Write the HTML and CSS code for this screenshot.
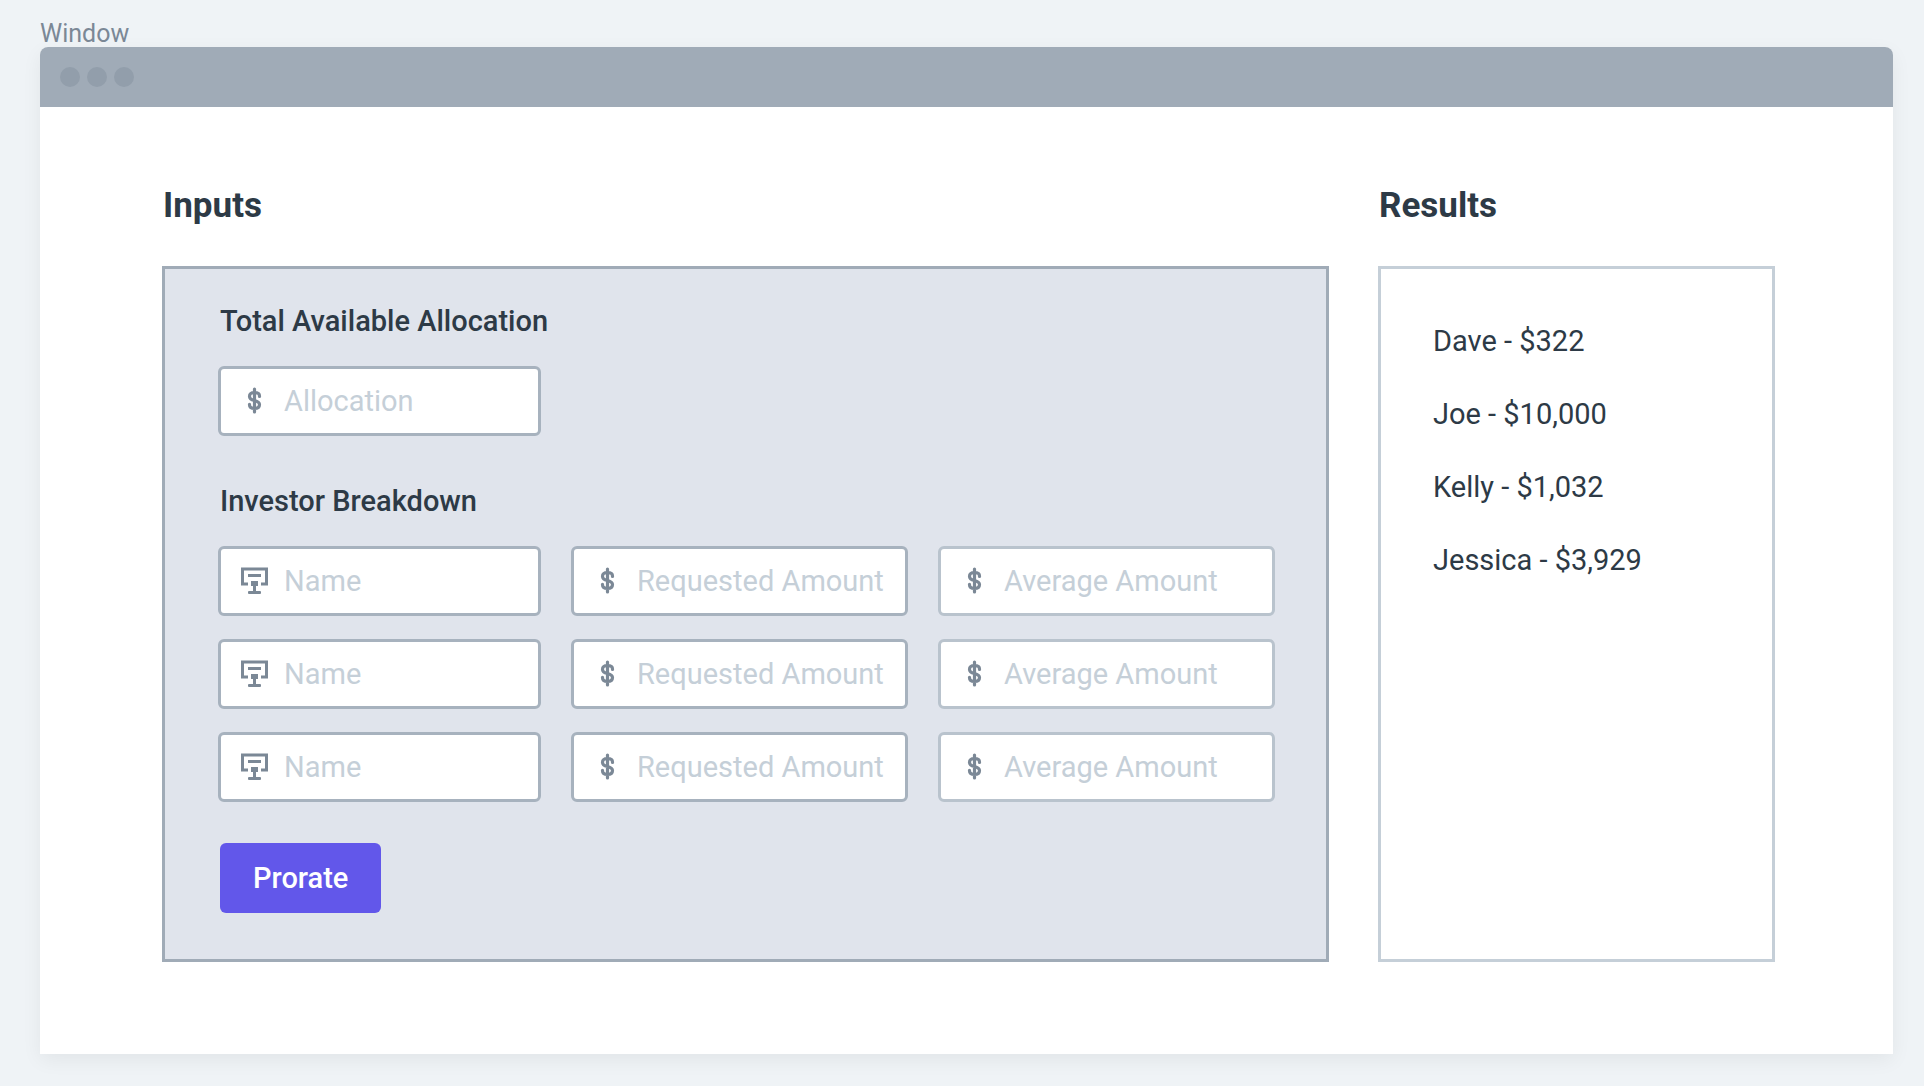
FILE: index.html
```html
<!DOCTYPE html>
<html lang="en">
<head>
<meta charset="utf-8">
<meta name="viewport" content="width=device-width, initial-scale=1">
<title>Window</title>
<link rel="stylesheet" href="styles.css">
</head>
<body>
<svg class="sprite" aria-hidden="true">
  <symbol id="icon-dollar" viewBox="0 0 28 28">
    <path d="M13.500 2v23M18.500 9.500v-.5c0-2.400-2-3.500-5-3.500s-5 1.300-5 3.900c0 5.500 10 2.700 10 8.200 0 2.600-2 3.900-5 3.900s-5-1.300-5-3.700v-.5" fill="none" stroke="currentColor" stroke-width="3.200" stroke-linecap="round"/>
  </symbol>
  <symbol id="icon-name" viewBox="0 0 28 28">
    <path d="M7 17H1.500V2h24v15H20" fill="none" stroke="currentColor" stroke-width="3"/>
    <path d="M7 7h13v3H7zM10 14h7v5h-2v5h-3v-5h-2z" fill="currentColor"/>
    <rect x="7" y="24" width="13" height="3" rx="1" fill="currentColor"/>
  </symbol>
</svg>
<p class="window-label">Window</p>
<div class="window">
  <div class="titlebar"><span class="dot"></span><span class="dot"></span><span class="dot"></span></div>
  <main class="content">
    <section class="column">
      <h1 class="heading">Inputs</h1>
      <form class="panel form">
        <label class="label" for="allocation">Total Available Allocation</label>
        <div class="fields">
          <div class="field"><svg class="icon"><use href="#icon-dollar"/></svg><input class="input" id="allocation" type="text" placeholder="Allocation"></div>
        </div>
        <fieldset class="group">
          <legend class="label">Investor Breakdown</legend>
          <div class="fields">
            <div class="field"><svg class="icon"><use href="#icon-name"/></svg><input class="input" type="text" aria-label="Name 1" placeholder="Name"></div>
            <div class="field"><svg class="icon"><use href="#icon-dollar"/></svg><input class="input" type="text" aria-label="Requested Amount 1" placeholder="Requested Amount"></div>
            <div class="field field-light"><svg class="icon"><use href="#icon-dollar"/></svg><input class="input" type="text" aria-label="Average Amount 1" placeholder="Average Amount"></div>
            <div class="field"><svg class="icon"><use href="#icon-name"/></svg><input class="input" type="text" aria-label="Name 2" placeholder="Name"></div>
            <div class="field"><svg class="icon"><use href="#icon-dollar"/></svg><input class="input" type="text" aria-label="Requested Amount 2" placeholder="Requested Amount"></div>
            <div class="field field-light"><svg class="icon"><use href="#icon-dollar"/></svg><input class="input" type="text" aria-label="Average Amount 2" placeholder="Average Amount"></div>
            <div class="field"><svg class="icon"><use href="#icon-name"/></svg><input class="input" type="text" aria-label="Name 3" placeholder="Name"></div>
            <div class="field"><svg class="icon"><use href="#icon-dollar"/></svg><input class="input" type="text" aria-label="Requested Amount 3" placeholder="Requested Amount"></div>
            <div class="field field-light"><svg class="icon"><use href="#icon-dollar"/></svg><input class="input" type="text" aria-label="Average Amount 3" placeholder="Average Amount"></div>
          </div>
        </fieldset>
        <div class="actions"><button class="button" type="button">Prorate</button></div>
      </form>
    </section>
    <section class="column">
      <h2 class="heading">Results</h2>
      <ul class="panel results">
        <li>Dave - $322</li>
        <li>Joe - $10,000</li>
        <li>Kelly - $1,032</li>
        <li>Jessica - $3,929</li>
      </ul>
    </section>
  </main>
</div>
</body>
</html>
```
FILE: styles.css
```css
* { box-sizing: border-box; }

body {
  margin: 0;
  padding: 20px 31px 32px 40px;
  background: #eff3f6;
  color: #2d3a46;
  font-family: Roboto, "Liberation Sans", sans-serif;
  font-size: 29px;
  line-height: 36px;
}

.sprite { position: absolute; width: 0; height: 0; }

.window-label {
  margin: 0;
  color: #7b8896;
  font-size: 25px;
  line-height: 27px;
}

.window {
  background: #fff;
  border-radius: 8px 8px 0 0;
  box-shadow: 0 6px 20px rgba(0, 0, 0, 0.06);
}

.titlebar {
  display: flex;
  align-items: center;
  gap: 7px;
  height: 60px;
  padding: 0 20px;
  background: #a0abb7;
  border-radius: 8px 8px 0 0;
}

.dot {
  width: 20px;
  height: 20px;
  border-radius: 50%;
  background: #929eab;
}

.content {
  display: grid;
  grid-template-columns: minmax(0, 1167fr) minmax(0, 397fr);
  gap: 49px;
  padding: 79px 118px 92px 122px;
}

.column { display: flex; flex-direction: column; }

.heading {
  margin: 0 0 40px;
  padding: 0 1px;
  font-size: 35px;
  font-weight: 700;
  line-height: 40px;
}

.panel {
  flex: 1;
  margin: 0;
  border: 3px solid #c5cfd8;
}

.form {
  padding: 34px 51px 46px 53px;
  background: #e0e4ec;
  border-color: #a0abb7;
}

.label {
  display: block;
  margin-bottom: 27px;
  padding: 0 2px;
  font-weight: 500;
}

.group {
  min-width: 0;
  margin: 47px 0 41px;
  padding: 0;
  border: 0;
}

.fields {
  display: grid;
  grid-template-columns: minmax(0, 323fr) minmax(0, 337fr) minmax(0, 337fr);
  gap: 23px 30px;
}

.field {
  display: flex;
  align-items: center;
  gap: 15px;
  height: 70px;
  padding: 0 16px 0 20px;
  background: #fff;
  border: 3px solid #a7b2be;
  border-radius: 6px;
}

.field-light { border-color: #b9c3cd; }

.icon {
  flex: none;
  width: 28px;
  height: 28px;
  color: #7b8896;
}

.input {
  flex: 1;
  min-width: 0;
  padding: 0;
  border: 0;
  outline: 0;
  background: transparent;
  color: inherit;
  font: inherit;
}

.input::placeholder { color: #c5cfd8; opacity: 1; }

.actions { padding: 0 2px; }

.button {
  display: block;
  height: 70px;
  padding: 0 33px;
  border: 0;
  border-radius: 6px;
  background: #6257ea;
  color: #fff;
  font: inherit;
  font-weight: 500;
}

.results {
  display: flex;
  flex-direction: column;
  gap: 37px;
  padding: 54px 52px;
  list-style: none;
}
```
